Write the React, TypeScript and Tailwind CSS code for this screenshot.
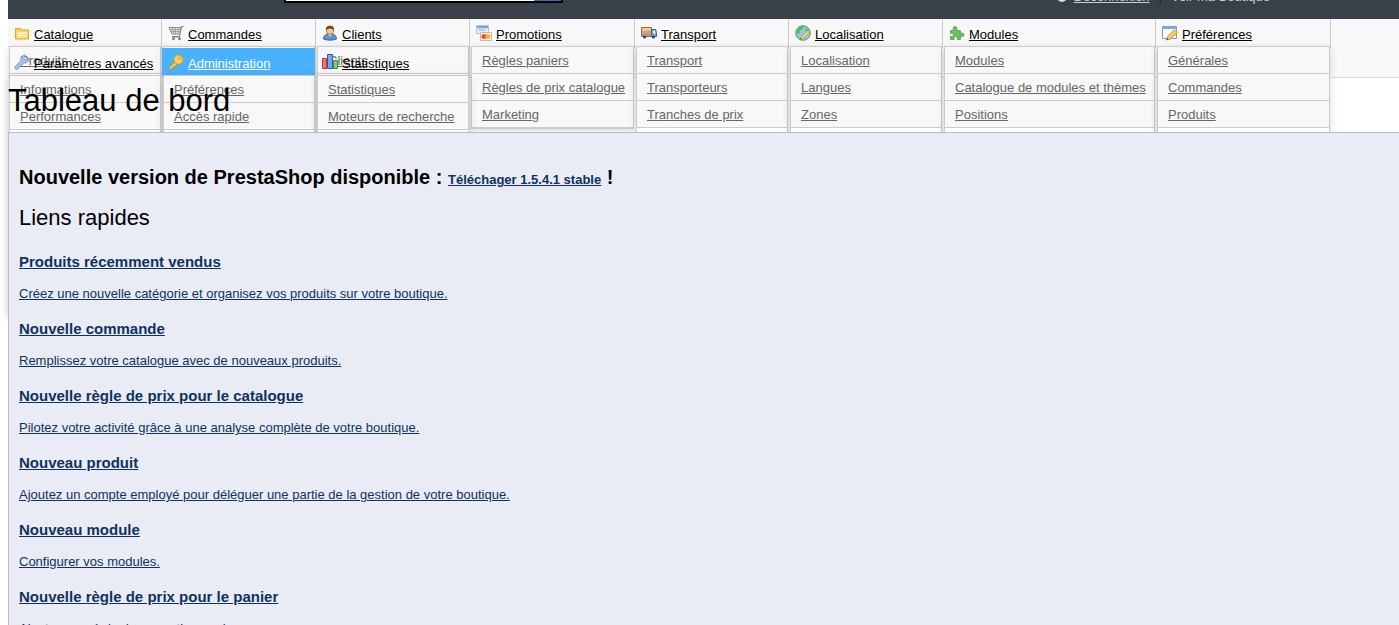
import type { ReactNode } from "react";

type Tab = {
  name: string;
  width: string;
  icon: ReactNode;
  links: string[];
  menuHeight?: string;
  active?: boolean;
};

const Icon = ({ children }: { children: ReactNode }) => (
  <svg viewBox="0 0 16 16" className="h-4 w-4 shrink-0" aria-hidden="true">
    {children}
  </svg>
);

const FolderIcon = () => (
  <Icon>
    <path d="M1.5 3.5h5l1 1.5h7v9h-13z" fill="#f6c94e" stroke="#e3a33a" />
    <path d="M2.5 6.5h11v6.5h-11z" fill="#fbe28b" />
    <path d="M4 8.5h5M8 7.5h4M4 10.5h8" stroke="#fff6d2" />
  </Icon>
);

const CartIcon = () => (
  <Icon>
    <path d="M15.5 1.5h-2l-2 10h-7.500" fill="none" stroke="#777" />
    <path d="M1 2.500h12l-1.300 6.500H4z" fill="#e4e4e4" stroke="#888" />
    <path d="M2 4.500h10.500M3 6.500h9M4.500 2.500l1.500 6.500M7.500 2.500V9M10.500 2.500l-1 6.500" stroke="#999" strokeWidth="0.8" />
    <path d="M4 12h8" stroke="#888" />
    <circle cx="5.5" cy="13.8" r="1.4" fill="#777" />
    <circle cx="11.5" cy="13.8" r="1.4" fill="#777" />
  </Icon>
);

const UserIcon = () => (
  <Icon>
    <path d="M1.5 14c0-3.5 2.3-5 6.5-5s6.5 1.5 6.5 5c-3 1.5-10 1.5-13 0z" fill="#5b93cf" stroke="#2f659f" />
    <path d="M6 9l2 3 2-3z" fill="#f3d3ac" />
    <circle cx="8" cy="5.5" r="3.8" fill="#f2c594" stroke="#9b6330" strokeWidth="0.8" />
    <path d="M4 5.5C3.5 2 5.5.8 8 .8s4.5 1.2 4 4.7C11 3.8 9.5 3.5 8 3.8 6.5 3.5 5 3.8 4 5.5z" fill="#7a4218" />
  </Icon>
);

const PromoIcon = () => (
  <Icon>
    <path d="M.5.5h12v8H.5z" fill="#e8eef7" stroke="#b4c4dc" />
    <path d="M1 1h11v2.2H1z" fill="#7ba3d8" />
    <path d="M3 5h7" stroke="#5f8ccd" strokeDasharray="2 1" />
    <path d="M4.5 7.5h11v8h-11z" fill="#fff3df" stroke="#cfb9a0" />
    <circle cx="8" cy="11.5" r="2.5" fill="#e8503d" />
    <circle cx="12" cy="11.5" r="2.5" fill="#f6b43c" />
  </Icon>
);

const TruckIcon = () => (
  <Icon>
    <path d="M.5 2.500h10v9H.5z" fill="#d5a36b" stroke="#8c7055" />
    <path d="M1 3h9v2.500H1z" fill="#f1cd9a" />
    <path d="M1 8.500h9v2.500H1z" fill="#a0a0a0" />
    <path d="M10.5 4.500h4l1 3v4h-5z" fill="#7ba6dd" stroke="#3e5f8c" />
    <path d="M12 5.500h2l.5 3H12z" fill="#dcecfc" />
    <circle cx="3.5" cy="12" r="1.6" fill="#444" />
    <circle cx="12.5" cy="12" r="1.6" fill="#444" />
  </Icon>
);

const GlobeIcon = () => (
  <Icon>
    <circle cx="8" cy="8" r="7.3" fill="#8cc9ee" stroke="#4b9a6e" />
    <path d="M2 5c1.5-3 5-4 7-3.5L7.5 4 5 5.5 4.5 8 2 9zM11 3l2.5 2-1 3-2-1z" fill="#5cb85a" />
    <path d="M5 14.5l1-3 7-6.5 2 2-7 6.5z" fill="#f7ce62" stroke="#c5923a" strokeWidth="0.8" />
    <path d="M5 14.5l.6-1.8 1.3 1.2z" fill="#555" />
  </Icon>
);

const PuzzleIcon = () => (
  <Icon>
    <path
      d="M1.5 5.5h3.3C3.500 3 4.500 1.500 6 1.500S8.500 3 7.400 5.500h4v3.200c2-1.300 3.600-.5 3.600 1.100s-1.600 2.300-3.600 1.100v3.600H8.200c.8-2-.2-2.900-1.500-2.900s-2.300.9-1.500 2.900H1.500v-3.300c2 .8 3-.2 3-1.400s-1-2.100-3-1.300z"
      fill="#6cc15c"
      stroke="#4b9c4a"
      strokeWidth="0.8"
    />
  </Icon>
);

const FormEditIcon = () => (
  <Icon>
    <path d="M.5 1.5h14v12H.5z" fill="#f7faff" stroke="#7f9cc4" />
    <path d="M1 2h13v2H1z" fill="#7eaae4" />
    <path d="M4.5 15l1-3.5 7-7 3 3-7 6.5z" fill="#f6c95c" stroke="#c08b35" strokeWidth="0.8" />
    <path d="M4.5 15l.6-2 1.5 1.4z" fill="#444" />
  </Icon>
);

const WrenchIcon = () => (
  <Icon>
    <path
      d="M1 12.5l6-6C6.300 3.500 8.500.8 11.500 1L9.800 3.500l.7 2 2 .5L15 4.300c.4 3-2.300 5.300-5.200 4.600l-6 6.200C2 16 .1 14.300 1 12.500z"
      fill="#a9c0ee"
      stroke="#8095c8"
      strokeWidth="0.9"
    />
  </Icon>
);

const KeyIcon = () => (
  <Icon>
    <path d="M7 7.5L1 13.5v2h2.500l.5-1.500h1.500l.5-1.700h1.500L10 10z" fill="#f7c948" stroke="#b98426" strokeWidth="0.8" />
    <circle cx="10.5" cy="5.5" r="4.7" fill="#fbd457" stroke="#c68f28" strokeWidth="0.9" />
    <circle cx="12" cy="4" r="1.3" fill="#fff" stroke="#a87722" strokeWidth="0.7" />
  </Icon>
);

const ChartIcon = () => (
  <Icon>
    <path d="M.5 4.5h4v10h-4z" fill="#ee7474" stroke="#c43a3a" />
    <path d="M5.500.5h5v14h-5z" fill="#74a5f2" stroke="#2a56b8" />
    <path d="M11.5 6.5h4v8h-4z" fill="#7ecb7e" stroke="#3c8f3c" />
  </Icon>
);

const tabs: Tab[] = [
  { name: "Catalogue", width: "w-[154px]", icon: <FolderIcon />, links: ["Produits"], menuHeight: "h-[270px]" },
  { name: "Commandes", width: "w-[154px]", icon: <CartIcon />, links: [], menuHeight: "h-[220px]" },
  { name: "Clients", width: "w-[154px]", icon: <UserIcon />, links: ["Clients"], menuHeight: "h-[220px]" },
  { name: "Promotions", width: "w-[165px]", icon: <PromoIcon />, links: ["Règles paniers", "Règles de prix catalogue", "Marketing"] },
  { name: "Transport", width: "w-[154px]", icon: <TruckIcon />, links: ["Transport", "Transporteurs", "Tranches de prix"], menuHeight: "h-[136px]" },
  { name: "Localisation", width: "w-[154px]", icon: <GlobeIcon />, links: ["Localisation", "Langues", "Zones"], menuHeight: "h-[220px]" },
  { name: "Modules", width: "w-[213px]", icon: <PuzzleIcon />, links: ["Modules", "Catalogue de modules et thèmes", "Positions"], menuHeight: "h-[136px]" },
  { name: "Préférences", width: "w-[175px]", icon: <FormEditIcon />, links: ["Générales", "Commandes", "Produits"], menuHeight: "h-[220px]" },
];

const moreTabs: Tab[] = [
  { name: "Paramètres avancés", width: "w-[154px]", icon: <WrenchIcon />, links: ["Informations", "Performances"], menuHeight: "h-[240px]" },
  { name: "Administration", width: "w-[154px]", icon: <KeyIcon />, links: ["Préférences", "Accès rapide"], menuHeight: "h-[240px]", active: true },
  { name: "Statistiques", width: "w-[154px]", icon: <ChartIcon />, links: ["Statistiques", "Moteurs de recherche"], menuHeight: "h-[136px]" },
];

const quickLinks = [
  { title: "Produits récemment vendus", text: "Créez une nouvelle catégorie et organisez vos produits sur votre boutique." },
  { title: "Nouvelle commande", text: "Remplissez votre catalogue avec de nouveaux produits." },
  { title: "Nouvelle règle de prix pour le catalogue", text: "Pilotez votre activité grâce à une analyse complète de votre boutique." },
  { title: "Nouveau produit", text: "Ajoutez un compte employé pour déléguer une partie de la gestion de votre boutique." },
  { title: "Nouveau module", text: "Configurer vos modules." },
  { title: "Nouvelle règle de prix pour le panier", text: "Ajouter une règle de promotion panier." },
];

const MenuTab = ({ tab }: { tab: Tab }) => (
  <li className={`relative h-[29px] shrink-0 border-r border-[#ccc] ${tab.width}`}>
    <a
      href="#"
      className={`flex h-7 items-center gap-1 pl-[6px] underline ${tab.active ? "bg-[#49b2ff] text-white" : "text-black"}`}
    >
      {tab.icon}
      <span className="pt-[3px]">{tab.name}</span>
    </a>
    <ul
      className={`absolute top-[27px] right-0 left-px border border-[#ccc] bg-white shadow-[0_2px_8px_rgba(0,0,0,0.14)] ${tab.menuHeight ?? ""}`}
    >
      {tab.links.map((link) => (
        <li key={link} className="h-[27px] border-b border-[#ccc] bg-[#f8f8f8] pl-[10px] leading-[28px]">
          <a href="#" className="text-[#666] underline">
            {link}
          </a>
        </li>
      ))}
    </ul>
  </li>
);

export default function App() {
  return (
    <div className="h-screen overflow-hidden bg-white pl-2 font-['Liberation_Sans',Arial,sans-serif] text-[13px] text-black">
      <header className="flex h-[19px] items-end overflow-hidden bg-[#3a404a]">
        <form className="mb-4 ml-[276px] flex border-2 border-black">
          <input type="search" aria-label="Rechercher" className="h-5 w-[248px] bg-white px-1" />
          <button type="submit" aria-label="Lancer la recherche" className="h-5 w-[27px] bg-[#3b73b9]" />
        </form>
        <div className="mr-[129px] mb-[14px] ml-auto flex items-center leading-4 text-[#ccc]">
          <svg viewBox="0 0 10 10" className="mr-[7px] h-[10px] w-[10px]" aria-hidden="true">
            <circle cx="5" cy="5" r="4" fill="none" stroke="#ddd" strokeWidth="2" />
          </svg>
          <a href="#" className="underline">
            Déconnexion
          </a>
          <span className="mx-[9px] text-[#222]">|</span>
          <a href="#">Voir ma Boutique</a>
        </div>
      </header>

      <nav className="border-b border-[#ddd] bg-[#f8f8f8]">
        <ul className="flex">
          {tabs.map((tab) => (
            <MenuTab key={tab.name} tab={tab} />
          ))}
        </ul>
        <ul className="flex">
          {moreTabs.map((tab) => (
            <MenuTab key={tab.name} tab={tab} />
          ))}
        </ul>
      </nav>

      <h1 className="relative h-[54px] text-[31px] leading-[46px]">Tableau de bord</h1>

      <main className="relative min-h-full border-t border-l border-[#b8bcc8] bg-[#e9ecf4] pl-[10px]">
        <h2 className="pt-8 text-xl leading-6 font-bold">
          Nouvelle version de PrestaShop disponible :{" "}
          <a href="#" className="text-[13px] text-[#0f3260] underline">
            Téléchager 1.5.4.1 stable
          </a>{" "}
          !
        </h2>
        <h2 className="mt-3 text-[22px] leading-7">Liens rapides</h2>
        <ul className="mt-5 text-[#0f3260]">
          {quickLinks.map((item) => (
            <li key={item.title} className="mb-[15px]">
              <h4 className="text-[15px] leading-5 font-bold">
                <a href="#" className="underline">
                  {item.title}
                </a>
              </h4>
              <p className="mt-3 leading-5">
                <a href="#" className="underline">
                  {item.text}
                </a>
              </p>
            </li>
          ))}
        </ul>
      </main>
    </div>
  );
}
